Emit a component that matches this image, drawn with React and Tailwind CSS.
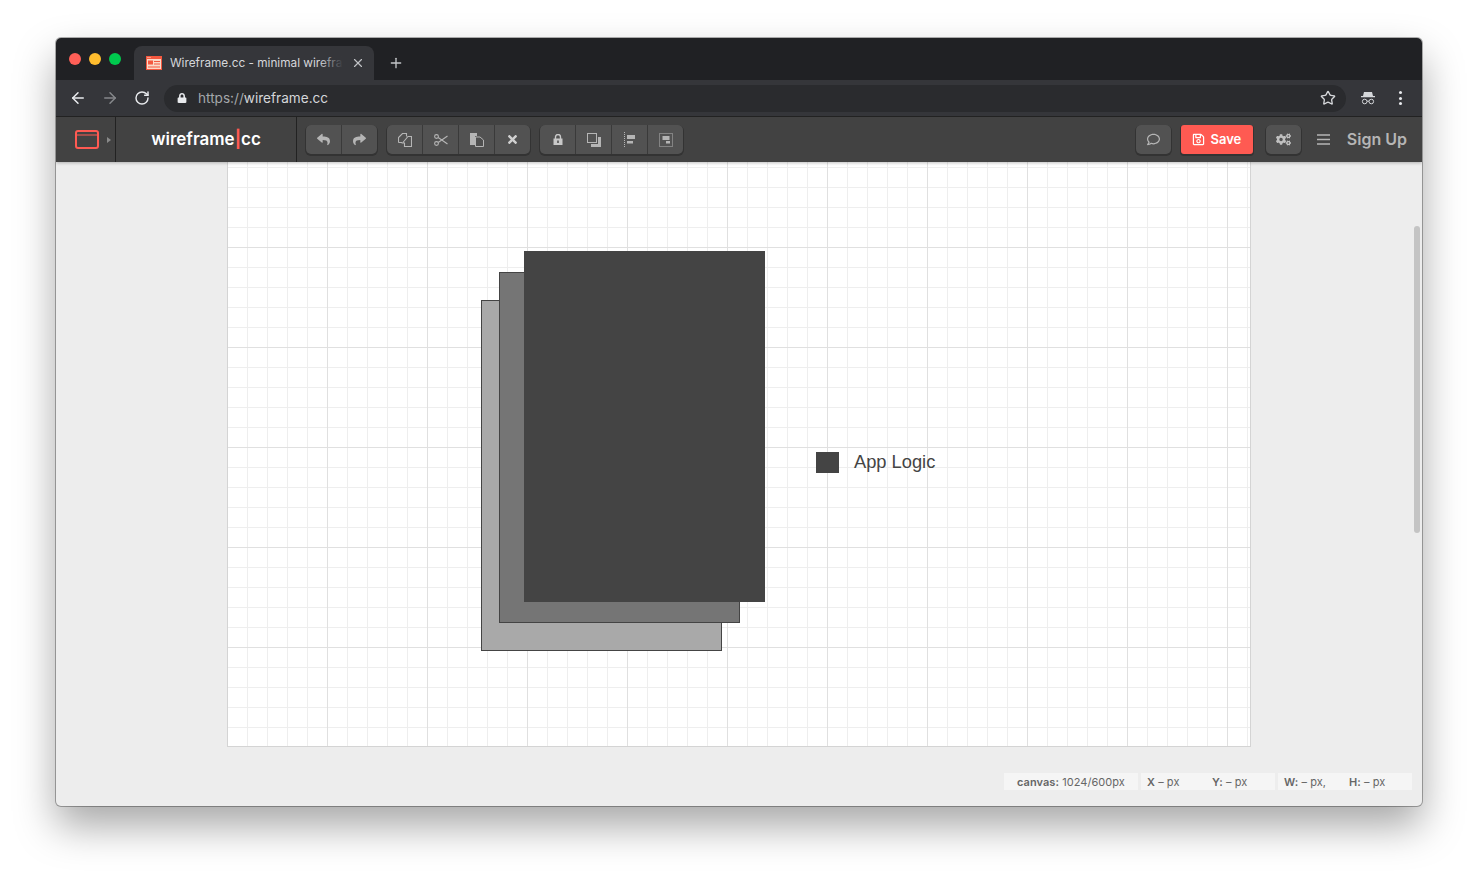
import React from 'react'
import { ArrowLeft, ArrowRight, RotateCw, Star, X, Plus } from 'lucide-react'
import { FaReply, FaShare, FaTimes, FaRegComment, FaRegSave, FaCogs, FaLock } from 'react-icons/fa'

const CopyIcon = () => (
  <svg width="14" height="14" viewBox="0 0 14 14" fill="none" stroke="#b5b5b5" strokeWidth="1.1">
    <path d="M0.5 9.5 V4.5 L4.5 0.5 H8.5 V3.5" />
    <path d="M0.5 9.5 H4" />
    <path d="M4.5 10 L10 3.5 H13.5 V13.5 H6.5 V10 Z" />
  </svg>
)

const ScissorsIcon = () => (
  <svg width="14" height="12" viewBox="0 0 14 12" fill="none" stroke="#b5b5b5" strokeWidth="1.1">
    <circle cx="2.5" cy="2.5" r="1.9" />
    <circle cx="2.5" cy="9.5" r="1.9" />
    <path d="M4.2 3.5 L13.5 10 M4.2 8.5 L13.5 2" />
  </svg>
)

const PasteIcon = () => (
  <svg width="14" height="14" viewBox="0 0 14 14">
    <path d="M0 0 H7 V3 H5 V12 H0 Z" fill="#b5b5b5" />
    <path d="M5.5 4 H10 L13.5 7 V13.5 H5.5 Z" fill="#4f4f4f" stroke="#b5b5b5" />
  </svg>
)

const CanvasLockIcon = () => (
  <svg width="10" height="11" viewBox="0 0 10 11">
    <path d="M2.5 5 V3 a2.5 2.5 0 0 1 5 0 V5" fill="none" stroke="#c8c8c8" strokeWidth="1.4" />
    <path fillRule="evenodd" d="M0.5 4.5 H9.5 V11 H0.5 Z M4.2 6.5 V9 H5.8 V6.5 Z" fill="#c8c8c8" />
  </svg>
)

const BackIcon = () => (
  <svg width="14" height="14" viewBox="0 0 14 14" fill="none">
    <rect x="0.5" y="0.5" width="9" height="9" stroke="#b5b5b5" />
    <path d="M11 4 H14 V14 H4 V11 H11 Z" fill="#b5b5b5" />
  </svg>
)

const AlignIcon = () => (
  <svg width="12" height="15" viewBox="0 0 12 15">
    <path d="M0.5 0 V15" stroke="#b5b5b5" strokeDasharray="1 1" fill="none" />
    <rect x="3" y="3" width="8" height="4" fill="#b5b5b5" />
    <rect x="3" y="9" width="6" height="2.5" fill="#b5b5b5" />
  </svg>
)

const GroupIcon = () => (
  <svg width="14" height="14" viewBox="0 0 14 14">
    <rect x="0.5" y="0.5" width="13" height="13" fill="none" stroke="#b5b5b5" strokeDasharray="1 1" />
    <rect x="3.5" y="3" width="7" height="4" fill="#b5b5b5" />
    <rect x="7" y="8" width="4" height="2.5" fill="#b5b5b5" />
  </svg>
)

const MenuIcon = () => (
  <svg width="13" height="11" viewBox="0 0 13 11" stroke="#b5b5b5" strokeWidth="1.6">
    <path d="M0 1 H13 M0 5.5 H13 M0 10 H13" />
  </svg>
)

const Favicon = () => (
  <svg width="16" height="14" viewBox="0 0 16 14">
    <rect width="16" height="14" fill="#f4583f" />
    <rect x="1" y="3" width="14" height="10" fill="#fbd9c8" />
    <path d="M1.5 1 H2.5 V2 H1.5 Z M3.5 1 H4.5 V2 H3.5 Z" fill="#fbd9c8" />
    <rect x="2" y="4.5" width="5" height="4" fill="#f4583f" />
    <path d="M8 5 H14 V6 H8 Z M8 7.5 H14 V8.5 H8 Z M2 10.5 H14 V11.5 H2 Z" fill="#f4583f" />
  </svg>
)

const LogoIcon = () => (
  <svg width="24" height="19" viewBox="0 0 24 19" fill="none" stroke="#ff5a52" strokeWidth="2">
    <rect x="1" y="1" width="22" height="17" rx="2" />
    <path d="M1 5 H23" strokeWidth="1.2" />
  </svg>
)

const IncognitoIcon = () => (
  <svg width="14" height="14" viewBox="0 0 14 14" fill="none" stroke="#d5d7da">
    <path d="M3 1 H11 L12 5 H2 Z" fill="#d5d7da" stroke="none" />
    <path d="M0 5.7 H14" strokeWidth="1.2" />
    <circle cx="3.7" cy="10.5" r="2.3" />
    <circle cx="10.3" cy="10.5" r="2.3" />
    <path d="M6 10.2 H8" />
  </svg>
)

const ToolGroup = ({ items, className }) => (
  <div className={`h-[29px] flex rounded-[5px] bg-[#525252] shadow-[0_1px_0_1px_#333] ${className}`}>
    {items.map((icon, i) => (
      <div
        key={i}
        className={`h-full flex items-center justify-center ${i === items.length - 1 ? 'w-[35px]' : 'w-9 border-r border-[#3a3a3a]'}`}
      >
        {icon}
      </div>
    ))}
  </div>
)

const Chrome = () => (
  <div className="shrink-0 relative z-10 shadow-[0_1px_3px_rgba(0,0,0,0.25)]">
    {/* Tabs */}
    <div className="h-[42px] bg-[#202124] flex items-end">
      <div className="flex gap-2 w-[78px] pl-[13px] pb-[15px]">
        <span className="w-3 h-3 rounded-full bg-[#ff5f57]" />
        <span className="w-3 h-3 rounded-full bg-[#ffbd2e]" />
        <span className="w-3 h-3 rounded-full bg-[#00ca4e]" />
      </div>
      <div className="w-[240px] h-[34px] bg-[#35363a] rounded-t-lg flex items-center pl-3 pr-[9px] text-[#d5d7da] text-[11.8px] font-['Inter',sans-serif]">
        <Favicon />
        <div className="relative ml-2 mt-[1px] flex-1 overflow-hidden whitespace-nowrap">
          Wireframe.cc - minimal wirefra
          <div className="absolute right-0 top-0 bottom-0 w-6 bg-gradient-to-r from-transparent to-[#35363a]" />
        </div>
        <X size={14} className="ml-2 text-[#c0c2c5]" />
      </div>
      <Plus size={16} className="ml-[14px] mb-[9px] text-[#c4c6c9]" />
    </div>

    {/* Address bar */}
    <div className="h-[36px] bg-[#35363a] flex items-center">
      <ArrowLeft size={18} strokeWidth={2} className="ml-[13px] text-[#e8eaed]" />
      <ArrowRight size={18} strokeWidth={2} className="ml-[14px] text-[#85878a]" />
      <RotateCw size={16} strokeWidth={2.2} className="ml-[15px] text-[#e8eaed]" />
      <div className="ml-[14px] w-[1182px] h-[27px] rounded-full bg-[#2a2b2e] flex items-center pl-[13px] pr-[10px] font-['Inter',sans-serif] text-[13.6px] text-[#d5d7da]">
        <FaLock size={10} className="text-[#e8eaed]" />
        <span className="ml-[11px]"><span className="text-[#a4a7aa]">https://</span>wireframe.cc</span>
        <Star size={16} className="ml-auto text-[#d5d7da]" />
      </div>
      <div className="ml-[15px]"><IncognitoIcon /></div>
      <div className="ml-[24px] flex flex-col gap-[2.5px]">
        <span className="w-[3px] h-[3px] rounded-full bg-[#e8eaed]" />
        <span className="w-[3px] h-[3px] rounded-full bg-[#e8eaed]" />
        <span className="w-[3px] h-[3px] rounded-full bg-[#e8eaed]" />
      </div>
    </div>

    {/* App toolbar */}
    <div className="h-[46px] bg-[#424242] border-t border-[#222] flex items-center font-['Inter',sans-serif]">
      <div className="w-[60px] h-full flex items-center justify-end pr-[4px] gap-[8px] border-r border-[#222]">
        <LogoIcon />
        <span className="border-l-4 border-y-[3px] border-y-transparent border-l-[#8a8a8a]" />
      </div>
      <div className="w-[181px] h-full flex items-center justify-center border-r border-[#222] text-white font-semibold text-[17px]">
        <span>wireframe</span><span className="text-[#ff5a52] font-bold">|</span><span>cc</span>
      </div>
      <ToolGroup className="ml-[9px]" items={[<FaReply size={13} color="#b5b5b5" />, <FaShare size={13} color="#b5b5b5" />]} />
      <ToolGroup className="ml-[10px]" items={[<CopyIcon />, <ScissorsIcon />, <PasteIcon />, <FaTimes size={13} color="#d0d0d0" />]} />
      <ToolGroup className="ml-[10px]" items={[<CanvasLockIcon />, <BackIcon />, <AlignIcon />, <GroupIcon />]} />
      <div className="ml-auto flex items-center pr-[15px]">
        <ToolGroup items={[<FaRegComment size={13} color="#b5b5b5" />]} />
        <div className="ml-[10px] w-[72px] h-[29px] rounded-[3px] bg-[#ff5a52] shadow-[0_1px_0_1px_#333] flex items-center justify-center gap-[5px] text-white font-semibold text-[13px]">
          <FaRegSave size={13} />
          <span className="mt-[1px]">Save</span>
        </div>
        <ToolGroup className="ml-[13px]" items={[<FaCogs size={15} color="#c0c0c0" />]} />
        <div className="ml-[16px] flex"><MenuIcon /></div>
        <span className="ml-[17px] mb-[1px] text-[16px] font-semibold text-[#b5b5b5]">Sign Up</span>
      </div>
    </div>
  </div>
)

const Sheet = ({ className }) => (
  <div className={`absolute w-[241px] h-[351px] border border-[#444] ${className}`} />
)

const Canvas = () => (
  <div className="relative w-[1024px] h-[585px] ml-[171px] bg-white border-x border-b border-[#d4d4d4] bg-[linear-gradient(to_right,#e0e0e0_1px,transparent_1px),linear-gradient(to_bottom,#e0e0e0_1px,transparent_1px),linear-gradient(to_right,#eeeeee_1px,transparent_1px),linear-gradient(to_bottom,#eeeeee_1px,transparent_1px)] bg-[size:100px_100px,100px_100px,20px_20px,20px_20px] bg-[position:-1px_0,0_85px,-1px_0,0_5px]">
    <Sheet className="left-[253px] top-[138px] bg-[#a9a9a9]" />
    <Sheet className="left-[271px] top-[110px] bg-[#757575]" />
    <Sheet className="left-[296px] top-[89px] bg-[#444444]" />
    <div className="absolute left-[588px] top-[290px] w-[23px] h-[21px] bg-[#444]" />
    <div className="absolute left-[626px] top-[288px] text-[18.3px] leading-[24px] text-[#444] font-['Liberation_Sans',sans-serif]">App Logic</div>
  </div>
)

const StatusBar = () => (
  <div className="flex justify-end gap-[3px] pr-[10px] mt-[26px] text-[11px] tracking-[0.005em] text-[#666] font-['Inter',sans-serif]">
    <div className="w-[134px] h-[17px] pt-[1px] bg-[#f5f5f5] flex items-center pl-[13px]">
      <b className="font-semibold">canvas:</b>&nbsp;1024/600px
    </div>
    <div className="w-[134px] h-[17px] pt-[1px] bg-[#f5f5f5] flex items-center pl-[6px]">
      <span className="w-[65px]"><b className="font-semibold">X</b> – px</span>
      <span><b className="font-semibold">Y:</b> – px</span>
    </div>
    <div className="w-[134px] h-[17px] pt-[1px] bg-[#f5f5f5] flex items-center pl-[6px]">
      <span className="w-[65px]"><b className="font-semibold">W:</b> – px,</span>
      <span><b className="font-semibold">H:</b> – px</span>
    </div>
  </div>
)

export default function App() {
  return (
    <div className="w-[1478px] h-[880px] bg-white overflow-hidden pt-[38px] pl-[56px]">
      <div className="relative w-[1366px] h-[768px] rounded-[5px] overflow-hidden bg-[#ededed] flex flex-col ring-1 ring-black/30 shadow-[0_20px_40px_rgba(0,0,0,0.35)]">
        <Chrome />
        <Canvas />
        <StatusBar />
        <div className="absolute left-[1358px] top-[188px] w-[6px] h-[307px] rounded-full bg-[#c4c4c4]" />
      </div>
    </div>
  )
}
